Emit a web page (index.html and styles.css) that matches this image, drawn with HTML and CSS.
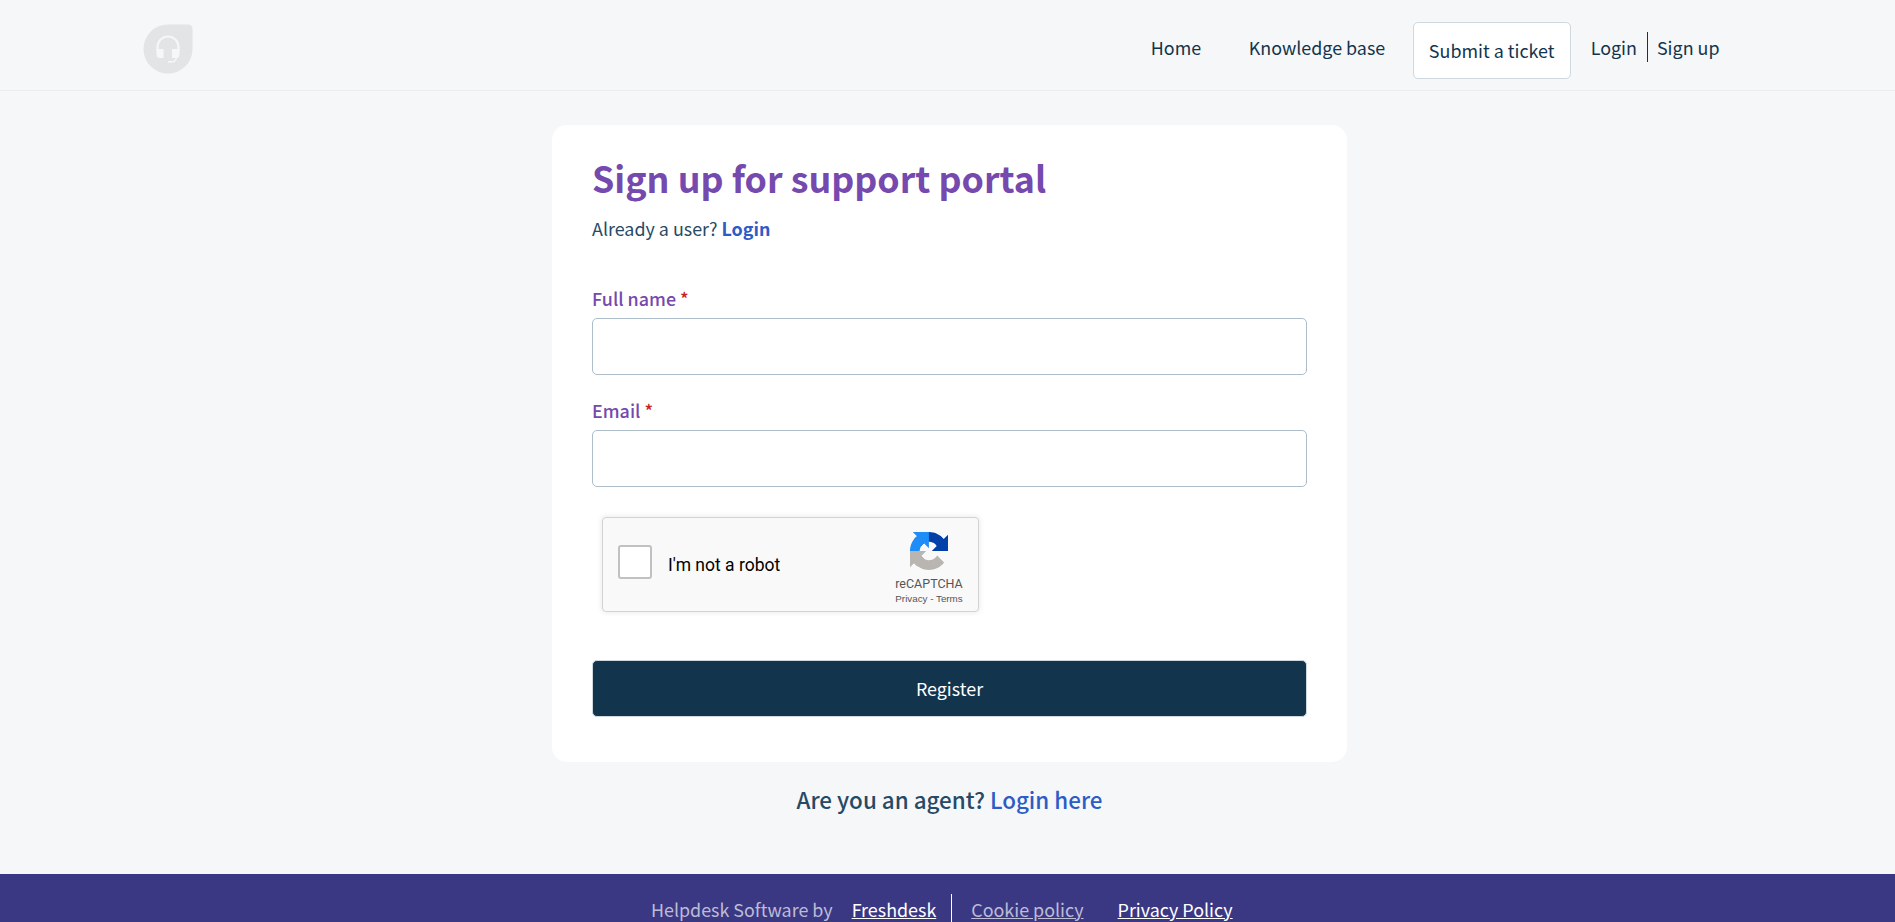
FILE: index.html
```html
<!DOCTYPE html>
<html lang="en">
<head>
  <meta charset="UTF-8">
  <meta name="viewport" content="width=device-width, initial-scale=1.0">
  <title>Sign up for support portal</title>
  <link rel="stylesheet" href="styles.css">
</head>
<body>

  <!-- Header -->
  <header class="header">
    <a class="logo" href="#">
      <svg width="50" height="50" viewBox="0 0 50 50">
        <path d="M25 .5H45Q49.500 .5 49.500 5V25A24.500 24.500 0 1 1 25 .5Z" fill="#e3e4e6"/>
        <path d="M14.500 27V23a10.500 10.500 0 0 1 21 0V27" fill="none" stroke="#f5f7f9" stroke-width="2"/>
        <path d="M13.500 25H20.500V34H17Q13.500 34 13.500 30.500ZM29 25H36.500V30.500Q36.500 34 33 34H29Z" fill="#f5f7f9"/>
        <path d="M33.500 33Q33 37.800 29.500 37.800H25" fill="none" stroke="#f5f7f9" stroke-width="1.500"/>
      </svg>
    </a>
    <nav class="nav">
      <a class="nav-link" href="#">Home</a>
      <a class="nav-link" href="#">Knowledge base</a>
      <a class="btn-ticket" href="#">Submit a ticket</a>
      <a class="nav-login" href="#">Login</a>
      <a class="nav-signup" href="#">Sign up</a>
    </nav>
  </header>

  <!-- Sign up form -->
  <main class="main">
    <form class="card">
      <h1 class="title">Sign up for support portal</h1>
      <p class="subtitle">Already a user? <a href="#">Login</a></p>

      <label class="label" for="name">Full name <span class="required">*</span></label>
      <input class="input" id="name" type="text">

      <label class="label" for="email">Email <span class="required">*</span></label>
      <input class="input" id="email" type="email">

      <div class="captcha">
        <span class="captcha-box"></span>
        <span class="captcha-text">I'm not a robot</span>
        <div class="captcha-brand">
          <svg width="38" height="38" viewBox="0 0 64 64">
            <path fill="#0040a8" d="M64 31.955l-.033-1.370V4.687l-7.160 7.160C50.948 4.674 42.033.093 32.050.093c-10.400 0-19.622 4.960-25.458 12.640l11.736 11.860a15.550 15.550 0 0 1 4.754-5.334c2.050-1.600 4.952-2.906 8.968-2.906.485 0 .860.057 1.135.163 4.976.393 9.288 3.140 11.828 7.124l-8.307 8.307L64 31.953"/>
            <path fill="#1f8df7" d="M31.862.094l-1.370.033H4.594l7.160 7.160C4.580 13.147 0 22.060 0 32.046c0 10.400 4.960 19.622 12.640 25.458L24.500 45.768a15.550 15.550 0 0 1-5.334-4.754c-1.600-2.050-2.906-4.952-2.906-8.968 0-.485.057-.860.163-1.135.393-4.976 3.140-9.288 7.124-11.828l8.307 8.307L31.860.095"/>
            <path fill="#b9b5b1" d="M.001 32.045l.033 1.370v25.898l7.160-7.160c5.860 7.173 14.774 11.754 24.760 11.754 10.400 0 19.622-4.960 25.458-12.640l-11.736-11.860a15.550 15.550 0 0 1-4.754 5.334c-2.050 1.600-4.952 2.906-8.968 2.906-.485 0-.860-.057-1.135-.163-4.976-.393-9.288-3.140-11.828-7.124l8.307-8.307c-10.522.040-22.400.066-27.295-.005"/>
          </svg>
          <span class="captcha-name">reCAPTCHA</span>
          <span class="captcha-links"><a href="#">Privacy</a> - <a href="#">Terms</a></span>
        </div>
      </div>

      <button class="btn-register" type="button">Register</button>
    </form>

    <p class="agent">Are you an agent? <a href="#">Login here</a></p>
  </main>

  <!-- Footer -->
  <footer class="footer">
    <span class="footer-by">Helpdesk Software by</span>
    <a class="footer-brand" href="#">Freshdesk</a>
    <a class="footer-cookie" href="#">Cookie policy</a>
    <a class="footer-privacy" href="#">Privacy Policy</a>
  </footer>

</body>
</html>
```
FILE: styles.css
```css
* {
  margin: 0;
  padding: 0;
  box-sizing: border-box;
}

html, body {
  height: 100%;
  overflow: hidden;
}

body {
  display: flex;
  flex-direction: column;
  background-color: #f5f7f9;
  color: #12344d;
  font-family: "Source Sans Pro", "Noto Sans CJK SC", sans-serif;
  font-size: 17.9px;
  line-height: 30px;
}

a {
  color: inherit;
  text-decoration: none;
}

.header {
  display: flex;
  flex-shrink: 0;
  justify-content: space-between;
  align-items: flex-start;
  height: 91px;
  padding: 0 175.5px 0 143px;
  border-bottom: 1px solid #ebeef0;
}

.logo {
  height: 50px;
  margin-top: 24px;
}

.logo svg {
  display: block;
}

.nav {
  display: flex;
  align-items: flex-start;
  padding-top: 22px;
}

.nav-link {
  margin: 10px 0 0;
  padding-right: 47.5px;
}

.nav-link + .nav-link {
  padding-right: 27.5px;
}

.btn-ticket {
  width: 158px;
  height: 57px;
  padding-top: 12px;
  text-align: center;
  background-color: #fff;
  border: 1px solid #cfd7df;
  border-radius: 5px;
}

.nav-login {
  margin: 10px 0 0 20px;
  padding-right: 10px;
  border-right: 1px solid #12344d;
}

.nav-signup {
  margin: 10px 0 0 9px;
}

.main {
  flex-shrink: 0;
  height: 783px;
  padding: 34px 0 0 4px;
}

.card {
  width: 795px;
  height: 637px;
  margin: 0 auto;
  padding: 27px 40px 0;
  background-color: #fff;
  border-radius: 15px;
}

.title {
  color: #7549ad;
  font-size: 35.8px;
  font-weight: 700;
  line-height: 50px;
}

.subtitle {
  margin-top: 11px;
  color: #264966;
}

.subtitle a {
  color: #2c5cc5;
  font-weight: 700;
}

.label {
  display: block;
  margin-top: 40px;
  color: #7549ad;
  font-weight: 500;
}

.required {
  color: #c82124;
}

.input {
  display: block;
  width: 100%;
  height: 57px;
  margin-top: 5px;
  padding: 0 16px;
  font: inherit;
  background-color: #fff;
  border: 1px solid #aebdca;
  border-radius: 5px;
}

.input + .label {
  margin-top: 20px;
}

/* Captcha widget */
.captcha {
  display: flex;
  width: 377px;
  height: 95px;
  margin: 30px 0 0 10px;
  padding: 0 15px;
  color: #000;
  font-family: Roboto, sans-serif;
  background-color: #f9f9f9;
  border: 1px solid #d3d3d3;
  border-radius: 4px;
  box-shadow: 0 0 5px 1px rgba(0, 0, 0, 0.08);
}

.captcha-box {
  width: 34px;
  height: 34px;
  margin-top: 27px;
  background-color: #fff;
  border: 2px solid #c1c1c1;
  border-radius: 3px;
}

.captcha-text {
  margin: 32px 0 0 16px;
  font-size: 17.5px;
}

.captcha-brand {
  display: flex;
  flex-direction: column;
  align-items: center;
  width: 70px;
  margin: 14px -1px 0 auto;
  color: #555;
}

.captcha-name {
  margin-top: 6px;
  font-size: 12.5px;
  line-height: 16px;
}

.captcha-links {
  margin-top: 1px;
  font-family: "Liberation Sans", Arial, sans-serif;
  font-size: 9.8px;
  line-height: 12px;
  white-space: nowrap;
}

.btn-register {
  display: block;
  width: 100%;
  height: 57px;
  margin-top: 48px;
  padding-bottom: 2px;
  color: #fff;
  font: inherit;
  background-color: #12344d;
  border: 1px solid #cfd7df;
  border-radius: 5px;
}

.agent {
  margin-top: 22px;
  color: #264966;
  font-size: 22.4px;
  font-weight: 500;
  text-align: center;
}

.agent a {
  color: #2c5cc5;
}

.footer {
  display: flex;
  flex: 1;
  align-items: flex-start;
  min-height: 0;
  padding: 20px 0 0 651px;
  color: #fff;
  line-height: 28px;
  background-color: #3b3883;
}

.footer-by {
  color: #bdbcd6;
}

.footer-by,
.footer-cookie,
.footer-privacy,
.footer-brand {
  padding-top: 1px;
  height: 28px;
}

.footer-brand {
  margin-left: 19px;
  padding-right: 15px;
  text-decoration: underline;
  border-right: 1px solid #fff;
}

.footer-cookie {
  margin-left: 19px;
  color: #bdbcd6;
  text-decoration: underline;
}

.footer-privacy {
  margin-left: 34px;
  text-decoration: underline;
}
```
